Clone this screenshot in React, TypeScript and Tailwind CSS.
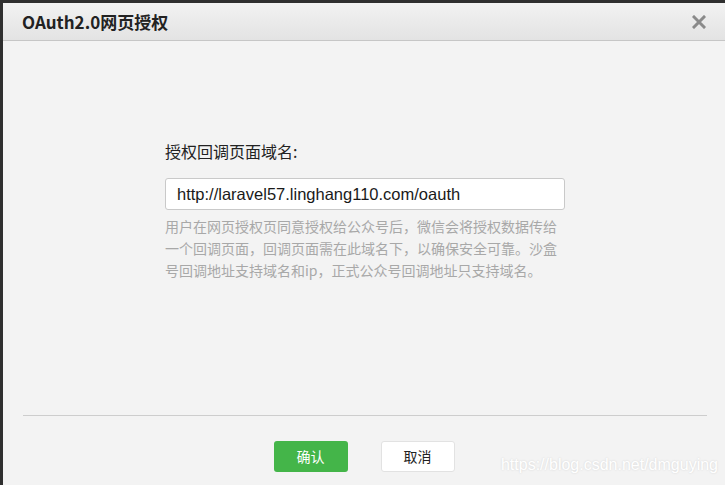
import { useState } from 'react';

const CJK = { fontFamily: '"Microsoft YaHei", "Noto Sans CJK SC", "Noto Sans", sans-serif' };

export default function App() {
  const [url, setUrl] = useState('http://laravel57.linghang110.com/oauth');

  return (
    <div className="w-[725px] h-[485px] bg-[#2f2f2f] pl-[3px] pt-[3px] overflow-hidden" style={CJK}>
      <div className="relative flex flex-col h-full bg-[#f3f3f3]">
        {/* header */}
        <div className="flex items-center justify-between h-[38px] pl-[19px] pr-[19px] bg-gradient-to-b from-[#f2f2f2] to-[#e3e3e3] border-b border-[#c6c6c6]">
          <h1 className="text-[17px] font-bold text-[#222]">OAuth2.0网页授权</h1>
          <button className="w-[14px] h-[14px] flex items-center justify-center">
            <svg width="14" height="14" viewBox="0 0 14 14">
              <path d="M2 2 L12 12 M12 2 L2 12" stroke="#8a8a8a" strokeWidth="3" strokeLinecap="square" />
            </svg>
          </button>
        </div>

        {/* content */}
        <div className="flex-1 pt-[99px] pl-[162px]">
          <div className="w-[400px]">
            <label className="block text-[16px] leading-[22px] text-[#222] mb-[16px]">授权回调页面域名:</label>
            <input
              value={url}
              onChange={(e) => setUrl(e.target.value)}
              className="w-[400px] h-[32px] bg-white border border-[#c9c9c9] rounded-[3px] pl-[11px] text-[16.5px] text-[#1a1a1a] outline-none"
              style={{ fontFamily: '"Liberation Sans", Arial, sans-serif' }}
            />
            <p className="mt-[5px] text-[14px] leading-[22px] text-[#a8a8a8]">
              用户在网页授权页同意授权给公众号后，微信会将授权数据传给一个回调页面，回调页面需在此域名下，以确保安全可靠。沙盒号回调地址支持域名和ip，正式公众号回调地址只支持域名。
            </p>
          </div>
        </div>

        {/* footer */}
        <div className="h-[70px]">
          <div className="ml-[20px] mr-[18px] border-t border-[#cdcdcd]" />
          <div className="flex justify-center gap-[33px] pt-[25px]">
            <button className="w-[74px] h-[31px] rounded-[3px] bg-[#44b549] text-white text-[14px]">确认</button>
            <button className="w-[74px] h-[31px] rounded-[3px] bg-white border border-[#e2e2e2] text-[#222] text-[14px]">取消</button>
          </div>
        </div>

        <span
          className="absolute right-[7px] bottom-[8px] text-[16px] text-white"
          style={{ fontFamily: '"Liberation Sans", Arial, sans-serif', textShadow: '0 0 2px #d0d0d0' }}
        >
          https://blog.csdn.net/dmguying
        </span>
      </div>
    </div>
  );
}
